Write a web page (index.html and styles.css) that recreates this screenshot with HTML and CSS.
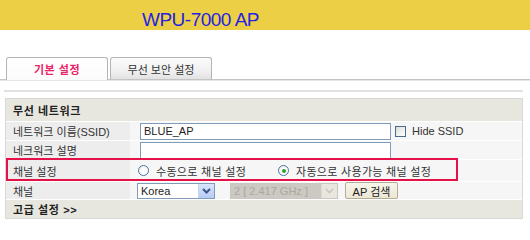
FILE: index.html
```html
<!DOCTYPE html>
<html lang="ko">
<head>
<meta charset="utf-8">
<title>WPU-7000 AP</title>
<link rel="stylesheet" href="styles.css">
</head>
<body>
<header class="topbar"><h1 class="title">WPU-7000 AP</h1></header>
<nav class="tabs">
  <div class="tab active">기본 설정</div>
  <div class="tab">무선 보안 설정</div>
</nav>
<section class="panel">
  <div class="form">
    <div class="row section h22"><div class="section-title">무선 네트워크</div></div>
    <div class="row h18">
      <div class="label">네트워크 이름(SSID)</div>
      <div class="value">
        <div class="input ml10">BLUE_AP</div>
        <span class="checkbox"></span><span class="chk-text">Hide SSID</span>
      </div>
    </div>
    <div class="row h18">
      <div class="label">네크워크 설명</div>
      <div class="value"><div class="input ml10"></div></div>
    </div>
    <div class="row h21">
      <div class="label">채널 설정</div>
      <div class="value">
        <div class="radio-opt first"><span class="radio"></span><span>수동으로 채널 설정</span></div>
        <div class="radio-opt"><span class="radio checked"></span><span>자동으로 사용가능 채널 설정</span></div>
      </div>
    </div>
    <div class="row h17">
      <div class="label">채널</div>
      <div class="value">
        <div class="select">
          <span class="sel-text">Korea</span>
          <span class="sel-arrow"><svg width="9" height="6" viewBox="0 0 9 6"><path d="M1 1 L4.5 4.5 L8 1" fill="none" stroke="#3b5788" stroke-width="2"/></svg></span>
        </div>
        <div class="select disabled">
          <span class="sel-text">2 [ 2.417 GHz ]</span>
          <span class="sel-arrow"><svg width="9" height="6" viewBox="0 0 9 6"><path d="M1 1 L4.5 4.5 L8 1" fill="none" stroke="#c8c6be" stroke-width="1.6"/></svg></span>
        </div>
        <div class="button">AP 검색</div>
      </div>
    </div>
    <div class="row section h18"><div class="section-title">고급 설정 &gt;&gt;</div></div>
    <div class="highlight"></div>
  </div>
</section>
</body>
</html>
```

FILE: styles.css
```css
html, body {
  margin: 0;
  padding: 0;
  background: #ffffff;
}
body {
  width: 530px;
  height: 227px;
  overflow: hidden;
  font-family: "Liberation Sans", "Noto Sans CJK KR", sans-serif;
  font-size: 11px;
  color: #333333;
}

.topbar {
  height: 30px;
  box-sizing: border-box;
  padding: 5px 0 0 142px;
  background: #edcf45;
  overflow: hidden;
}
.title {
  margin: 0;
  font-family: "Liberation Sans", sans-serif;
  font-weight: normal;
  font-size: 19px;
  line-height: 30px;
  letter-spacing: -0.5px;
  color: #2424e0;
}

.tabs {
  display: flex;
  gap: 2px;
  margin-top: 27px;
  padding-left: 6px;
  height: 22px;
  border-bottom: 1px solid #c4c4c4;
  box-shadow: 0 1px 0 #e6e6e6;
}
.tab {
  width: 102px;
  height: 22px;
  box-sizing: border-box;
  border: 1px solid #b4b4b4;
  border-bottom: none;
  border-radius: 3px 3px 0 0;
  display: flex;
  align-items: center;
  justify-content: center;
  background: linear-gradient(#fbfbfb, #f1f1f1 60%, #e2e2e2);
  color: #333333;
  font-size: 11px;
}
.tab.active {
  background: linear-gradient(#ffffff, #fbfbfb);
  color: #ea2366;
  font-weight: bold;
  letter-spacing: 0.5px;
  height: 23px;
  margin-bottom: -1px;
}

.panel {
  margin: 10px 7px 0 4px;
  border-top: 2px solid #e2e2e2;
  padding: 6px 0 0 1px;
}
.form {
  position: relative;
  width: 518px;
  box-sizing: border-box;
  border: 1px solid #d8d8d8;
  background: #ffffff;
}
.row {
  display: grid;
  grid-template-columns: 124px 1fr;
  border-top: 1px solid #ffffff;
}
.row:first-child { border-top: none; }
.h22 { height: 22px; }
.h21 { height: 21px; }
.h18 { height: 18px; }
.h17 { height: 17px; }

.section {
  display: flex;
  align-items: center;
  background: #e7e7df;
}
.section-title {
  padding-left: 7px;
  font-weight: bold;
  letter-spacing: 0.6px;
  color: #222222;
}
.label {
  background: #ededed;
  padding-left: 7px;
  display: flex;
  align-items: center;
  white-space: nowrap;
}
.value {
  background: #f6f6f6;
  display: flex;
  align-items: center;
  white-space: nowrap;
}

.input {
  width: 251px;
  height: 17px;
  box-sizing: border-box;
  border: 1px solid #7f9db9;
  background: #ffffff;
  padding-left: 3px;
  line-height: 15px;
  color: #222222;
}
.ml10 { margin-left: 10px; }

.checkbox {
  width: 11px;
  height: 11px;
  box-sizing: border-box;
  margin-left: 4px;
  border: 1px solid #4a6a8e;
  background: linear-gradient(135deg, #dcdcd6, #ffffff);
}
.chk-text {
  margin-left: 6px;
  color: #333333;
}

.radio-opt {
  display: flex;
  align-items: center;
  gap: 7px;
  letter-spacing: 0.3px;
}
.radio-opt.first {
  width: 140px;
  margin-left: 8px;
}
.radio {
  width: 11px;
  height: 11px;
  box-sizing: border-box;
  border-radius: 50%;
  border: 1px solid #4c74a0;
  background: radial-gradient(circle at 60% 60%, #ffffff 30%, #e6e6e0 100%);
  display: flex;
  align-items: center;
  justify-content: center;
}
.radio.checked::after {
  content: "";
  width: 4px;
  height: 4px;
  border-radius: 50%;
  background: #2aa42a;
}

.select {
  width: 78px;
  height: 16px;
  box-sizing: border-box;
  margin-left: 7px;
  border: 1px solid #7f9db9;
  background: #ffffff;
  display: flex;
}
.sel-text {
  flex: 1;
  padding-left: 3px;
  line-height: 14px;
  color: #222222;
}
.sel-arrow {
  width: 15px;
  display: flex;
  align-items: center;
  justify-content: center;
  background: linear-gradient(#d9e5fd, #b7cbf4);
  border-left: 1px solid #c8d6f0;
}
.select.disabled {
  width: 108px;
  margin-left: 15px;
  border-color: #c9c7bf;
  background: #cbc9c1;
}
.select.disabled .sel-text {
  color: #a9a8a2;
}
.select.disabled .sel-arrow {
  background: #e8e6de;
  border-left: 1px solid #dcdad2;
}

.button {
  width: 53px;
  height: 17px;
  box-sizing: border-box;
  margin-left: 7px;
  border: 1px solid #b3ad98;
  border-radius: 2px;
  background: linear-gradient(#f7f4ea, #ece7d4);
  display: flex;
  align-items: center;
  justify-content: center;
  color: #222222;
}

.highlight {
  position: absolute;
  left: 0;
  top: 59px;
  width: 452px;
  height: 23px;
  box-sizing: border-box;
  border: 2px solid #e5124a;
  pointer-events: none;
}
```
